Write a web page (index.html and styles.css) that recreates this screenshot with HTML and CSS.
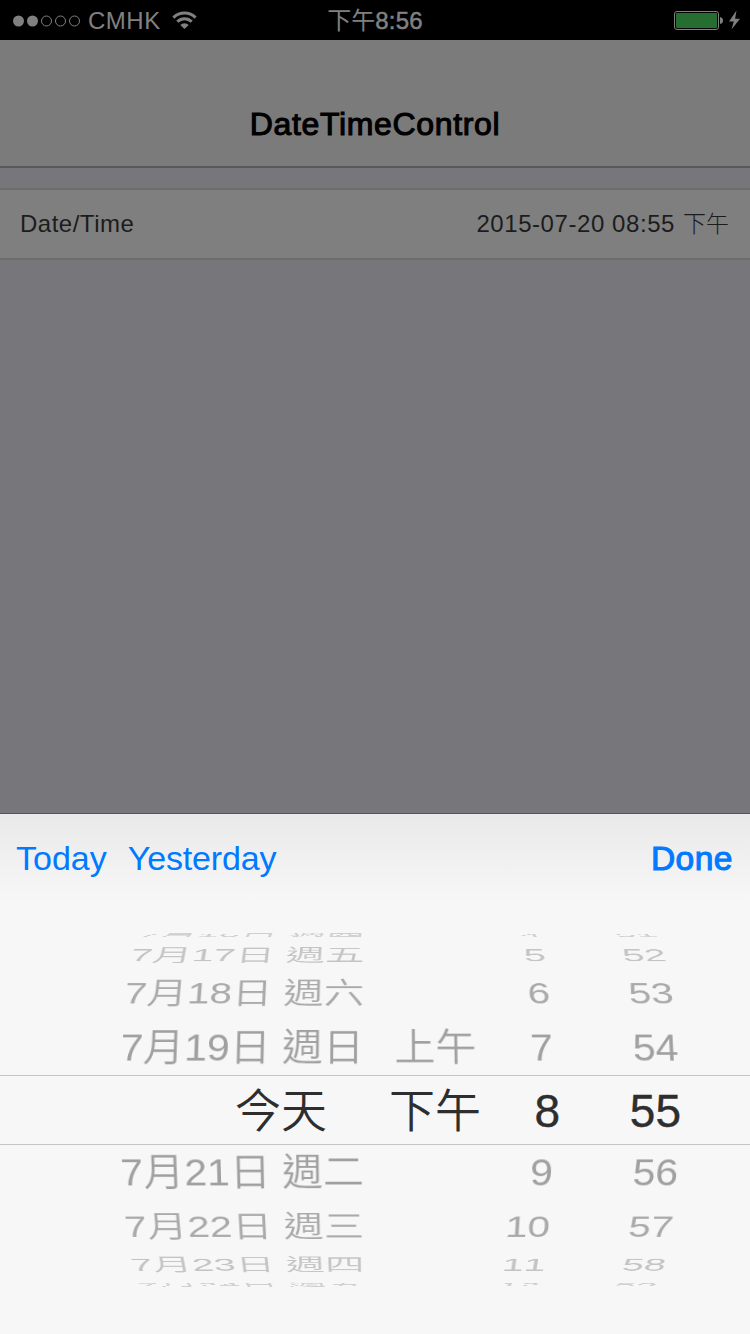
FILE: index.html
```html
<!DOCTYPE html>
<html lang="zh-Hant">
<head>
<meta charset="utf-8">
<title>DateTimeControl</title>
<link rel="stylesheet" href="styles.css">
</head>
<body>
<div class="screen">
  <header class="status">
    <div class="carrier">
      <svg class="signal" width="68" height="12" viewBox="0 0 68 12">
        <g fill="#808080"><circle cx="5.5" cy="6" r="5.5"/><circle cx="19.5" cy="6" r="5.5"/></g>
        <g fill="none" stroke="#808080"><circle cx="33.5" cy="6" r="5"/><circle cx="47.5" cy="6" r="5"/><circle cx="61.5" cy="6" r="5"/></g>
      </svg>
      <span class="carrier-name">CMHK</span>
      <svg class="wifi" width="25" height="19" viewBox="0 0 25 19">
        <g fill="none" stroke="#808080" stroke-width="3"><path d="M1.4 6.6a15.8 15.8 0 0 1 22.2 0"/><path d="M5.3 10.7a10.2 10.2 0 0 1 14.4 0"/></g>
        <path fill="#808080" d="M8.3 13.9a6 6 0 0 1 8.4 0L12.5 18z"/>
      </svg>
    </div>
    <div class="clock">下午<b>8:56</b></div>
    <svg class="battery" width="67" height="22" viewBox="0 0 67 22">
      <rect x=".5" y="1.5" width="44" height="18" rx="2.5" fill="none" stroke="#808080"/>
      <rect x="2" y="3" width="41" height="15" rx="1" fill="#266d32"/>
      <path fill="#808080" d="M46 7q3 .5 3 3.500t-3 3.500z"/>
      <path fill="#808080" d="M62.500.5 55 11.500h4.800L57.500 19.500 66 8.800h-4.900z"/>
    </svg>
  </header>
  <div class="navbar"><h1>DateTimeControl</h1></div>
  <main class="content">
    <div class="field">
      <span class="label">Date/Time</span>
      <span class="value"><span>2015-07-20 08:55</span><i>下午</i></span>
    </div>
  </main>
  <section class="sheet">
    <div class="toolbar">
      <span class="today">Today</span>
      <span class="yesterday">Yesterday</span>
      <span class="done">Done</span>
    </div>
    <div class="picker">
      <div class="wheel">
        <div class="row up4"><span>7月16日 週四</span><span></span><span>4</span><span>51</span></div>
        <div class="row up3"><span>7月17日 週五</span><span></span><span>5</span><span>52</span></div>
        <div class="row up2"><span>7月18日 週六</span><span></span><span>6</span><span>53</span></div>
        <div class="row up1"><span>7月19日 週日</span><span>上午</span><span>7</span><span>54</span></div>
        <div class="row down1"><span>7月21日 週二</span><span></span><span>9</span><span>56</span></div>
        <div class="row down2"><span>7月22日 週三</span><span></span><span>10</span><span>57</span></div>
        <div class="row down3"><span>7月23日 週四</span><span></span><span>11</span><span>58</span></div>
        <div class="row down4"><span>7月24日 週五</span><span></span><span>12</span><span>59</span></div>
      </div>
      <div class="selected"><span>今天</span><span>下午</span><b>8</b><b>55</b></div>
    </div>
  </section>
</div>
</body>
</html>
```
FILE: styles.css
```css
* { box-sizing: border-box; }
body {
  margin: 0;
  font-family: "Liberation Sans", "Noto Sans CJK TC", sans-serif;
}
.screen {
  width: 750px;
  height: 1334px;
  display: flex;
  flex-direction: column;
  overflow: hidden;
  background: #77767b;
}
.status {
  height: 40px;
  flex: none;
  padding-top: 1px;
  display: grid;
  grid-template-columns: 1fr auto 1fr;
  grid-template-rows: 40px;
  align-items: center;
  background: #000;
  color: #808080;
  font-size: 24px;
  line-height: 40px;
}
.carrier { display: flex; align-items: center; padding-left: 13px; }
.signal, .wifi { flex: none; }
.carrier-name { margin: 0 11px 0 7px; letter-spacing: .5px; }
.wifi { margin-bottom: 2px; }
.clock b { font-weight: 400; -webkit-text-stroke: .5px #808080; letter-spacing: .2px; }
.battery { justify-self: end; margin-right: 9px; }
.navbar {
  height: 128px;
  flex: none;
  padding-top: 62px;
  background: #7b7b7b;
  border-bottom: 2px solid #58585a;
  text-align: center;
}
.navbar h1 {
  margin: 0;
  font-size: 32px;
  line-height: 44px;
  font-weight: 400;
  letter-spacing: .65px;
  color: #000;
  -webkit-text-stroke: 1.1px #000;
}
.content { flex: 1; padding-top: 20px; }
.field {
  height: 72px;
  display: flex;
  justify-content: space-between;
  align-items: center;
  padding: 0 21px 0 20px;
  background: #7f7f7f;
  border: solid #6d6d6e;
  border-width: 2px 0;
  color: #1c1c1c;
  font-size: 24px;
  line-height: 28px;
}
.label { letter-spacing: .5px; }
.value { display: flex; gap: 8px; letter-spacing: .57px; }
.value i { font-style: normal; font-weight: 300; font-size: 23px; letter-spacing: 0; }
.sheet {
  height: 521px;
  flex: none;
  display: flex;
  flex-direction: column;
  background: #f7f7f7;
  border-top: 1px solid #565659;
}
.toolbar {
  height: 88px;
  flex: none;
  display: flex;
  align-items: center;
  padding: 1px 17px 0 16px;
  background: linear-gradient(#e9e9e9, #f7f7f7);
  color: #007aff;
  font-size: 34px;
}
.yesterday { margin-left: 21px; letter-spacing: -.15px; }
.done { margin-left: auto; font-size: 33.5px; letter-spacing: .5px; -webkit-text-stroke: 1.1px #007aff; }
/* Cylinder of rows: each one sits about 20 degrees further round. */
.picker {
  height: 354px;
  margin-top: 31px;
  display: grid;
  align-items: center;
  overflow: hidden;
}
.wheel {
  --radius: 190px;
  grid-area: 1 / 1;
  display: grid;
  perspective: 1900px;
  font-size: 41.2px;
  font-weight: 350;
  font-kerning: none;
  color: #a0a0a0;
}
.row {
  grid-area: 1 / 1;
  height: 64px;
  line-height: 64px;
  display: grid;
  grid-template-columns: 364px 113px 77px 126px;
  text-align: right;
  white-space: nowrap;
  transform: translateZ(calc(-1 * var(--radius))) rotateX(var(--turn)) translateZ(var(--radius));
}
.up4 { --turn: 78deg; --radius: 193px; color: #cfcfcf; }
.up3 { --turn: 58.6deg; color: #c4c4c4; }
.up2 { --turn: 38.9deg; color: #aaa; }
.up1 { --turn: 19.3deg; }
.down1 { --turn: -19.3deg; }
.down2 { --turn: -38.9deg; color: #aaa; }
.down3 { --turn: -58.6deg; color: #c4c4c4; }
.down4 { --turn: -78deg; --radius: 193px; color: #cfcfcf; }
.selected {
  grid-area: 1 / 1;
  height: 70px;
  line-height: 70px;
  display: grid;
  grid-template-columns: 327px 154px 79px 121px;
  text-align: right;
  border: solid #c5c5c6;
  border-width: 1px 0;
  background: #f7f7f7;
  color: #2e2e2e;
  font-size: 46px;
  font-weight: 350;
}
.selected b { font-weight: 400; -webkit-text-stroke: .4px #2e2e2e; }
```
